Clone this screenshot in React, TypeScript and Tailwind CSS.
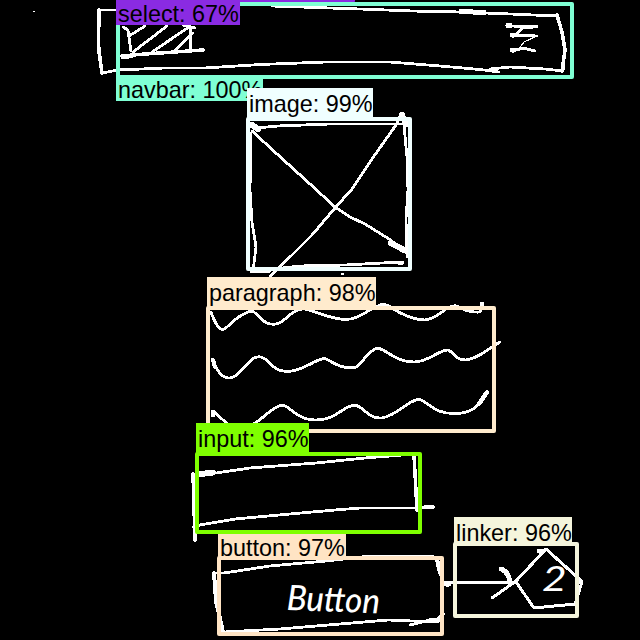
type Detection = {
  label: string;
  box: string;
  tag: string;
};

// Ordered back to front: later detections cover earlier ones.
const detections: Detection[] = [
  {
    label: "select: 67%",
    box: "left-[116px] top-[-40px] w-[239px] h-[43px] border-[#8a2be2]",
    tag: "left-[116px] top-0 w-[124px] h-[25px] bg-[#8a2be2] leading-[28px]",
  },
  {
    label: "navbar: 100%",
    box: "left-[116px] top-[2px] w-[458px] h-[77px] border-[#7fffd4]",
    tag: "left-[116px] top-[75px] w-[147px] h-[26px] bg-[#7fffd4] leading-[30px]",
  },
  {
    label: "image: 99%",
    box: "left-[246px] top-[117px] w-[166px] h-[154px] border-[#f0ffff]",
    tag: "left-[247px] top-[88px] w-[126px] h-[30px] bg-[#f0ffff] leading-[32px]",
  },
  {
    label: "paragraph: 98%",
    box: "left-[206px] top-[306px] w-[290px] h-[127px] border-[#ffebcd]",
    tag: "left-[207px] top-[277px] w-[169px] h-[33px] bg-[#ffebcd] leading-[32px]",
  },
  {
    label: "input: 96%",
    box: "left-[195px] top-[452px] w-[227px] h-[82px] border-[#7fff00]",
    tag: "left-[196px] top-[423px] w-[113px] h-[32px] bg-[#7fff00] leading-[32px]",
  },
  {
    label: "button: 97%",
    box: "left-[217px] top-[556px] w-[227px] h-[80px] border-[#ffe4c4]",
    tag: "left-[218px] top-[534px] w-[128px] h-[26px] bg-[#ffe4c4] leading-[28px]",
  },
  {
    label: "linker: 96%",
    box: "left-[453px] top-[542px] w-[126px] h-[76px] border-[#f5f5dc]",
    tag: "left-[454px] top-[517px] w-[118px] h-[28px] bg-[#f5f5dc] leading-[32px]",
  },
];

function Sketch() {
  return (
    <svg
      className="absolute inset-0"
      width="640"
      height="640"
      viewBox="0 0 640 640"
      fill="none"
      stroke="white"
      strokeWidth="2.8"
      strokeLinecap="round"
      strokeLinejoin="round"
      shapeRendering="crispEdges"
    >
      <path d="M33 11.5h1.5" strokeWidth="1" />
      {/* navbar outline */}
      <path d="M117 10L99 10L98.5 42L102 73L118 70L165 68L205 68L260 64.5L326 62L390 62L440 66L480 69.5L499 72M272 6L330 8L360 9L412 11L461 12L510 14L557 16L562 32L565 50L563 71L545 69L510 67L490 69" />
      <path d="M461 11.5L484 12.5" strokeWidth="5" />
      <path d="M99 10L98.5 48L102 73M557 15L562 32L565 50L562 71" strokeWidth="3.5" />
      {/* hatched logo */}
      <path d="M123 27L128 30L131 51M129 36L145 26M133 52L167 26M152 52L189 27M174 51L193 33M190 25L191 51M183 25L195 28" />
      <path d="M122 56L145 54L175 52L203 50" strokeWidth="3.5" />
      <path d="M123 57L131 56" strokeWidth="4.5" />
      {/* menu glyph */}
      <path d="M508 26L537 26.5M512 35L537 36M512 50L525 48.5L535 51M517 34L522 28L534 27" />
      <path d="M518 50L524 42L537 36" strokeWidth="1.2" />
      <path d="M508 25.5h2M512 35h2M512 50h2" strokeWidth="5" />
      {/* image placeholder */}
      <path d="M248 123L256 128L278 126L330 124L403 124M252 131L277 154L310 184L335 207L350 217L365 224L389 239L407 252M396 125L372 159L352 189L335 208L312 235L280 267L270 276M400 116L396 125M403 114L405 136L407 157L408 190L406 219L407 257M251 133L250 190L252 222L256 247L253 271L265 270L300 266L345 265L401 262" />
      <path d="M252 125L258 129M402 115L406 124M391 243L404 250" strokeWidth="6" />
      <path d="M252 271h17M400 263h2" strokeWidth="4" />
      <path d="M342 274h1" strokeWidth="1.5" />
      {/* paragraph waves */}
      <path d="M211 312C216 326 221 334 227 327Q240 314 251 311Q256 312 261 319C269 326 278 326 285 319Q296 308 305 309C318 312 327 318 344 319.5C358 320 366 311 376 307Q384 301 393 309C405 316 415 320 425 320C439 319 446 304 457 306Q468 313 480 312L483 305" />
      <path d="M214 362C218 374 226 382 235 376C246 369 250 355 261 357C271 360 271 371 287 371.5C305 371 314 359 325 358.5C334 363 343 370 356 367C364 362 368 350 378 348C390 352 396 362 414 362C429 362 438 350 448 350C455 353 455 360 466 360C477 359 488 349 500 342" />
      <path d="M212 411C217 413 222 420 229 425Q238 430 250 426C263 420 272 406 283 405C292 408 297 420 316 420C337 420 342 406 355 405C364 407 368 419 382 418C398 415 405 402 419 399C431 404 435 414 455 413.5C477 413 477 404 487 392" />
      <path d="M213 360L215 367M213 412v3M482 304v1M479 404L487 392" strokeWidth="4.2" />
      {/* input outline */}
      <path d="M194 474L216 473L250 468L316 463L365 458L415 454M193 474L195 540M193 527L200 525L235 519L290 514L335 510L360 508L420 508L434 507" />
      <path d="M201 474L213 472.5" strokeWidth="6" />
      <path d="M193 474L195 540M414 455L417 510M425 507h8" strokeWidth="3.5" />
      {/* button outline */}
      <path d="M213 573L224 573L270 566L326 561L370 556L432 556L439 562L442 583L443 618L437 622L388 620L340 624L280 629L224 632M410 625L430 620" />
      <path d="M214 573L216 601L223 632M430 620H438L443 614M437 560L440 573" strokeWidth="4" />
      {/* linker arrow and pentagon */}
      <path d="M444 583L486 582.5L516 582.5M492 598L516 581L546 549L577 577L582 582L575 604L534 608L516 582" strokeWidth="3" />
      <path d="M501 569Q508 571 510 582M446 584h3M539 551h3M580 582h1" strokeWidth="5" />
    </svg>
  );
}

export default function App() {
  return (
    <main className="relative h-[640px] w-[640px] overflow-hidden bg-black font-['Liberation_Sans',Arial,sans-serif]">
      <Sketch />
      <span className="absolute left-[287px] top-[575px] origin-left rotate-[2deg] scale-x-[0.94] whitespace-nowrap font-['Lato','Open_Sans',sans-serif] text-[35px] font-medium italic leading-[42px] text-white">
        Button
      </span>
      <span className="absolute left-[542px] top-[558px] origin-left scale-x-[1.25] font-['Lato','Open_Sans',sans-serif] text-[34px] italic leading-[40px] text-white">
        2
      </span>
      {detections.map((d) => (
        <div key={d.label} className={`absolute rounded-[2px] border-4 ${d.box}`} />
      ))}
      {detections.map((d) => (
        <div
          key={d.label}
          className={`absolute whitespace-nowrap pl-[2px] text-[23.4px] text-black ${d.tag}`}
        >
          {d.label}
        </div>
      ))}
    </main>
  );
}
